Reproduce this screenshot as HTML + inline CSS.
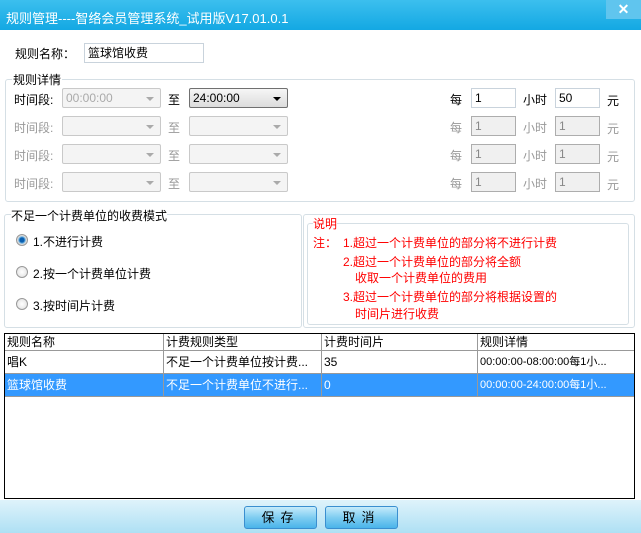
<html><head><style>
body{margin:0;width:641px;height:533px;background:#fff;font-family:"Liberation Sans","WenQuanYi Zen Hei","Noto Sans CJK SC",sans-serif;font-size:12px;position:relative;overflow:hidden}
.a{position:absolute;white-space:nowrap}
.title{left:0;top:0;width:641px;height:30px;background:linear-gradient(#3cbfee,#13a8e3);color:#fff;font-size:13px}
.inp{position:absolute;border:1px solid #c9d3dc;background:#fff;height:18px;box-sizing:border-box;height:20px;padding-left:3px;line-height:18px}
.dis{background:#f0f0f0;border-color:#adadad;color:#888}
.sel{position:absolute;border:1px solid #c9c9c9;border-radius:2px;width:99px;height:20px;box-sizing:border-box;background:#f4f4f4;color:#aaa;padding-left:3px;line-height:18px}
.sel:after{content:"";position:absolute;right:6px;top:8px;border:4px solid transparent;border-top:4px solid #aaa}
.sel.on{background:linear-gradient(#f6f6f6,#dcdcdc);border-color:#707070;color:#000}
.sel.on:after{border-top-color:#000}
.grp{position:absolute;border:1px solid #d5dfe5;border-radius:3px}
.g{color:#999}
.red{color:#f00}
.rad{position:absolute;width:10px;height:10px;border-radius:50%;border:1px solid #999;background:radial-gradient(#fff,#ddd)}
.tbl{position:absolute;left:4px;top:333px;width:629px;height:164px;border:1px solid #000;background:#fff}
.row{position:absolute;left:0;width:629px;border-bottom:1px solid #999}
.c{position:absolute;top:0;height:100%;border-left:1px solid #999;padding-left:2px;line-height:22px;overflow:hidden}
.btn{position:absolute;top:506px;width:73px;height:23px;box-sizing:border-box;border:1px solid #3a8fd0;border-radius:3px;background:linear-gradient(#c6ebfb,#7fcdf1 50%,#4ab4ea);text-align:center;line-height:21px;font-size:13px;letter-spacing:6px}
</style></head><body>
<div class="a title"><span style="position:absolute;left:6px;top:8px">规则管理----智络会员管理系统_试用版V17.01.0.1</span>
<div style="position:absolute;left:606px;top:0;width:35px;height:19px;background:#60c5ee;color:#fff;text-align:center;font-weight:bold;font-size:14px;line-height:18px">✕</div></div>
<div class="a" style="left:15px;top:45px">规则名称：</div>
<div class="inp" style="left:84px;top:43px;width:120px">篮球馆收费</div>
<div class="grp" style="left:5px;top:79px;width:628px;height:121px"></div>
<div class="a" style="left:12px;top:71px;background:#fff;padding:0 1px">规则详情</div>
<!-- rows -->
<div class="a" style="left:14px;top:91px">时间段:</div>
<div class="sel" style="left:62px;top:88px">00:00:00</div>
<div class="a" style="left:168px;top:91px">至</div>
<div class="sel on" style="left:189px;top:88px">24:00:00</div>
<div class="a" style="left:450px;top:91px">每</div><div class="inp" style="left:471px;top:88px;width:45px">1</div>
<div class="a" style="left:523px;top:91px">小时</div><div class="inp" style="left:555px;top:88px;width:45px">50</div>
<div class="a" style="left:607px;top:92px">元</div>

<div class="a g" style="left:14px;top:119px">时间段:</div><div class="sel" style="left:62px;top:116px"></div><div class="a g" style="left:168px;top:119px">至</div><div class="sel" style="left:189px;top:116px"></div>
<div class="a g" style="left:450px;top:119px">每</div><div class="inp dis" style="left:471px;top:116px;width:45px">1</div><div class="a g" style="left:523px;top:119px">小时</div><div class="inp dis" style="left:555px;top:116px;width:45px">1</div><div class="a g" style="left:607px;top:120px">元</div>

<div class="a g" style="left:14px;top:147px">时间段:</div><div class="sel" style="left:62px;top:144px"></div><div class="a g" style="left:168px;top:147px">至</div><div class="sel" style="left:189px;top:144px"></div>
<div class="a g" style="left:450px;top:147px">每</div><div class="inp dis" style="left:471px;top:144px;width:45px">1</div><div class="a g" style="left:523px;top:147px">小时</div><div class="inp dis" style="left:555px;top:144px;width:45px">1</div><div class="a g" style="left:607px;top:148px">元</div>

<div class="a g" style="left:14px;top:175px">时间段:</div><div class="sel" style="left:62px;top:172px"></div><div class="a g" style="left:168px;top:175px">至</div><div class="sel" style="left:189px;top:172px"></div>
<div class="a g" style="left:450px;top:175px">每</div><div class="inp dis" style="left:471px;top:172px;width:45px">1</div><div class="a g" style="left:523px;top:175px">小时</div><div class="inp dis" style="left:555px;top:172px;width:45px">1</div><div class="a g" style="left:607px;top:176px">元</div>

<div class="grp" style="left:4px;top:214px;width:296px;height:112px"></div>
<div class="a" style="left:11px;top:207px;background:#fff">不足一个计费单位的收费模式</div>
<div class="rad" style="left:16px;top:234px;background:radial-gradient(#0a5fb0 30%,#6ab0e0 45%,#ddd 60%)"></div><div class="a" style="left:33px;top:233px">1.不进行计费</div>
<div class="rad" style="left:16px;top:266px"></div><div class="a" style="left:33px;top:265px">2.按一个计费单位计费</div>
<div class="rad" style="left:16px;top:298px"></div><div class="a" style="left:33px;top:297px">3.按时间片计费</div>

<div class="grp" style="left:303px;top:214px;width:330px;height:112px"></div>
<div class="grp" style="left:307px;top:223px;width:320px;height:100px"></div>
<div class="a red" style="left:313px;top:215px;background:#fff">说明</div>
<div class="a red" style="left:313px;top:234px">注：</div>
<div class="a red" style="left:343px;top:234px">1.超过一个计费单位的部分将不进行计费</div>
<div class="a red" style="left:343px;top:253px">2.超过一个计费单位的部分将全额</div>
<div class="a red" style="left:355px;top:269px">收取一个计费单位的费用</div>
<div class="a red" style="left:343px;top:288px">3.超过一个计费单位的部分将根据设置的</div>
<div class="a red" style="left:355px;top:305px">时间片进行收费</div>

<div class="tbl">
<div class="row" style="top:0;height:16px"><div class="c" style="left:0;width:155px;border:0;line-height:16px">规则名称</div><div class="c" style="left:158px;width:153px;line-height:16px">计费规则类型</div><div class="c" style="left:316px;width:150px;line-height:16px">计费时间片</div><div class="c" style="left:472px;width:155px;line-height:16px">规则详情</div></div>
<div class="row" style="top:17px;height:22px"><div class="c" style="left:0;width:155px;border:0">唱K</div><div class="c" style="left:158px;width:153px">不足一个计费单位按计费...</div><div class="c" style="left:316px;width:150px">35</div><div class="c" style="left:472px;width:155px;font-size:11px">00:00:00-08:00:00每1小...</div></div>
<div class="row" style="top:40px;height:22px;background:#3399ff;color:#fff"><div class="c" style="left:0;width:155px;border:0">篮球馆收费</div><div class="c" style="left:158px;width:153px">不足一个计费单位不进行...</div><div class="c" style="left:316px;width:150px">0</div><div class="c" style="left:472px;width:155px;font-size:11px">00:00:00-24:00:00每1小...</div></div>
</div>
<div class="a" style="left:0;top:500px;width:641px;height:33px;background:linear-gradient(#dff3fb,#aee0f4)"></div>
<div class="btn" style="left:244px">保存</div>
<div class="btn" style="left:325px">取消</div>
</body></html>
